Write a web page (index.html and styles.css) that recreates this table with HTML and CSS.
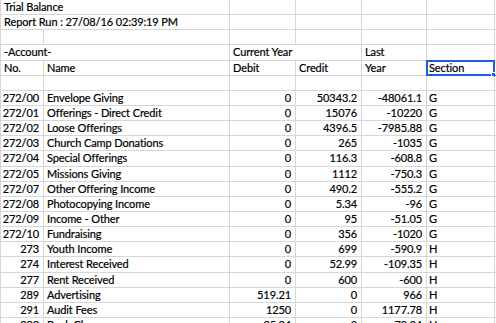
FILE: index.html
```html
<!DOCTYPE html>
<html>
<head>
<meta charset="utf-8">
<link rel="stylesheet" href="styles.css">
</head>
<body>
<div class="sheet">
  <div class="c span2">Trial Balance</div><div class="c"></div><div class="c"></div><div class="c"></div><div class="c"></div><div class="c"></div>
  <div class="c span2">Report Run : 27/08/16 02:39:19 PM</div><div class="c"></div><div class="c"></div><div class="c"></div><div class="c"></div><div class="c"></div>
  <div class="c"></div><div class="c"></div><div class="c"></div><div class="c"></div><div class="c"></div><div class="c"></div><div class="c"></div>
  <div class="c span2">-Account-</div><div class="c span2">Current Year</div><div class="c">Last</div><div class="c"></div><div class="c"></div>
  <div class="c">No.</div><div class="c">Name</div><div class="c">Debit</div><div class="c">Credit</div><div class="c">Year</div><div class="c sel">Section<span class="sel-box"><span class="sel-handle"></span></span></div><div class="c"></div>
  <div class="c"></div><div class="c"></div><div class="c"></div><div class="c"></div><div class="c"></div><div class="c"></div><div class="c"></div>

  <div class="c n">272/00</div><div class="c">Envelope Giving</div><div class="c n">0</div><div class="c n">50343.2</div><div class="c n">-48061.1</div><div class="c s">G</div><div class="c"></div>
  <div class="c n">272/01</div><div class="c">Offerings - Direct Credit</div><div class="c n">0</div><div class="c n">15076</div><div class="c n">-10220</div><div class="c s">G</div><div class="c"></div>
  <div class="c n">272/02</div><div class="c">Loose Offerings</div><div class="c n">0</div><div class="c n">4396.5</div><div class="c n">-7985.88</div><div class="c s">G</div><div class="c"></div>
  <div class="c n">272/03</div><div class="c">Church Camp Donations</div><div class="c n">0</div><div class="c n">265</div><div class="c n">-1035</div><div class="c s">G</div><div class="c"></div>
  <div class="c n">272/04</div><div class="c">Special Offerings</div><div class="c n">0</div><div class="c n">116.3</div><div class="c n">-608.8</div><div class="c s">G</div><div class="c"></div>
  <div class="c n">272/05</div><div class="c">Missions Giving</div><div class="c n">0</div><div class="c n">1112</div><div class="c n">-750.3</div><div class="c s">G</div><div class="c"></div>
  <div class="c n">272/07</div><div class="c">Other Offering Income</div><div class="c n">0</div><div class="c n">490.2</div><div class="c n">-555.2</div><div class="c s">G</div><div class="c"></div>
  <div class="c n">272/08</div><div class="c">Photocopying Income</div><div class="c n">0</div><div class="c n">5.34</div><div class="c n">-96</div><div class="c s">G</div><div class="c"></div>
  <div class="c n">272/09</div><div class="c">Income - Other</div><div class="c n">0</div><div class="c n">95</div><div class="c n">-51.05</div><div class="c s">G</div><div class="c"></div>
  <div class="c n">272/10</div><div class="c">Fundraising</div><div class="c n">0</div><div class="c n">356</div><div class="c n">-1020</div><div class="c s">G</div><div class="c"></div>
  <div class="c n">273</div><div class="c">Youth Income</div><div class="c n">0</div><div class="c n">699</div><div class="c n">-590.9</div><div class="c s">H</div><div class="c"></div>
  <div class="c n">274</div><div class="c">Interest Received</div><div class="c n">0</div><div class="c n">52.99</div><div class="c n">-109.35</div><div class="c s">H</div><div class="c"></div>
  <div class="c n">277</div><div class="c">Rent Received</div><div class="c n">0</div><div class="c n">600</div><div class="c n">-600</div><div class="c s">H</div><div class="c"></div>
  <div class="c n">289</div><div class="c">Advertising</div><div class="c n">519.21</div><div class="c n">0</div><div class="c n">966</div><div class="c s">H</div><div class="c"></div>
  <div class="c n">291</div><div class="c">Audit Fees</div><div class="c n">1250</div><div class="c n">0</div><div class="c n">1177.78</div><div class="c s">H</div><div class="c"></div>
  <div class="c n">292</div><div class="c">Bank Charges</div><div class="c n">85.24</div><div class="c n">0</div><div class="c n">-79.24</div><div class="c s">H</div><div class="c"></div>
</div>
</body>
</html>
```

FILE: styles.css
```css
html, body {
  margin: 0;
  padding: 0;
  background: #ffffff;
}
body {
  width: 496px;
  height: 323px;
  overflow: hidden;
}
.sheet {
  display: grid;
  grid-template-columns: 42px 185px 65px 65px 64px 67px 1fr;
  grid-auto-rows: 14.15px;
  gap: 1px;
  padding-left: 1px;
  background: #d6d6d6;
  width: 495px;
  font-family: Lato, "Open Sans", sans-serif;
  font-size: 11px;
  letter-spacing: -0.1px;
  -webkit-text-stroke: 0.2px #000;
  color: #000;
}
.c {
  background: #ffffff;
  line-height: 14px;
  padding: 0 0 0 3px;
  white-space: nowrap;
  overflow: visible;
  position: relative;
}
.span2 {
  grid-column: span 2;
}
.n {
  text-align: right;
  padding: 0 4px 0 0;
}
.s {
  padding-left: 2px;
}
.sel {
  padding-left: 2px;
}
.sel-box {
  position: absolute;
  left: -1px;
  top: -1px;
  right: -1px;
  bottom: -1px;
  border: 2px solid #1c5fd8;
}
.sel-handle {
  position: absolute;
  right: -4px;
  bottom: -4px;
  width: 4px;
  height: 4px;
  background: #1c5fd8;
  border: 1px solid #ffffff;
}
```
